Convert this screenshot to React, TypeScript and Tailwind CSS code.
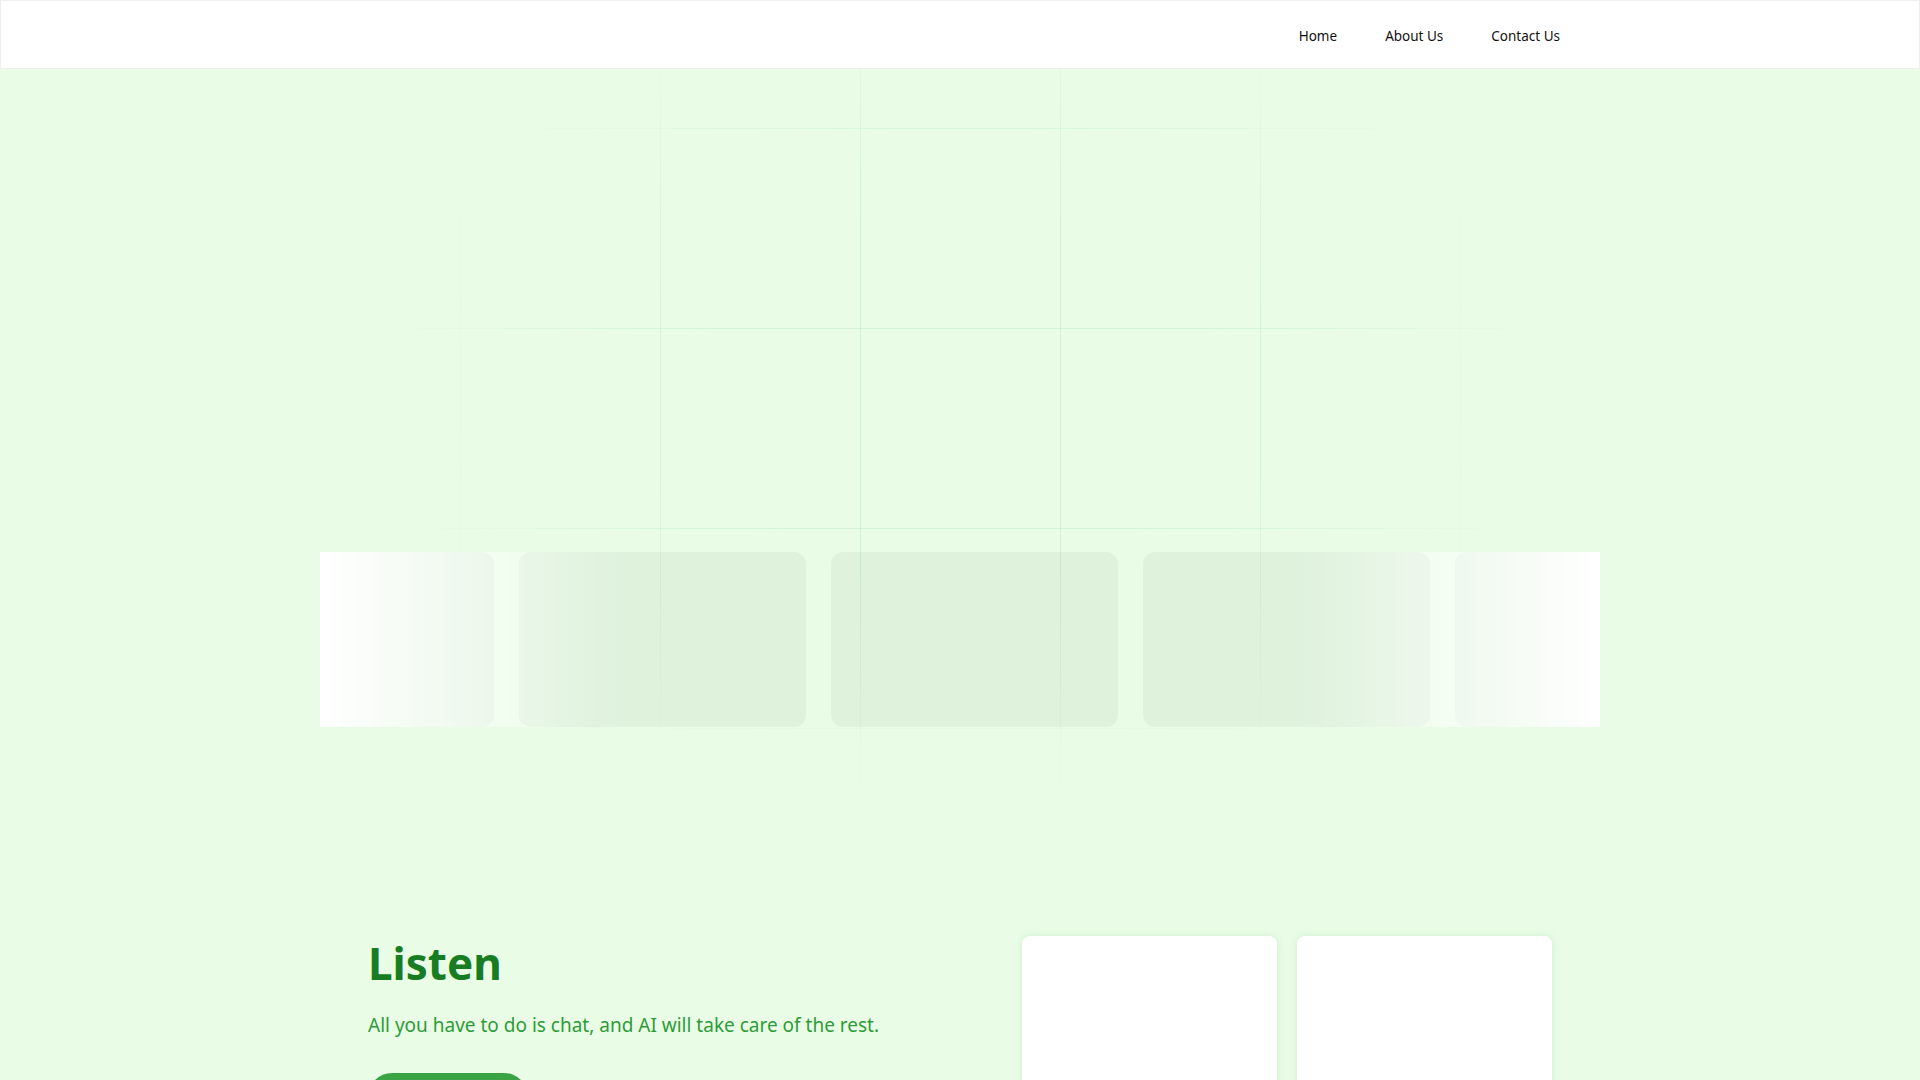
import React from "react"

const navLinks = ["Home", "About Us", "Contact Us"]

const Navbar: React.FC = () => {
  return (
    <header className="h-[69px] w-full border border-[#efefef] bg-white">
      <nav className="mx-auto flex h-full max-w-[1200px] items-center justify-end gap-12 pt-[3px]">
        {navLinks.map((label) => (
          <a key={label} href="#" className="text-[13.5px] text-[#111]">
            {label}
          </a>
        ))}
      </nav>
    </header>
  )
}

const Hero: React.FC = () => {
  const cards = [0, 1, 2, 3, 4]

  return (
    <section className="relative h-[867px] w-full pt-[483px]">
      {/* Grid backdrop */}
      <div className="pointer-events-none absolute inset-0 bg-[linear-gradient(to_right,rgba(22,163,74,0.11)_1px,transparent_1px),linear-gradient(to_bottom,rgba(22,163,74,0.11)_1px,transparent_1px)] bg-[size:200px_200px] bg-[position:60px_59px] [mask-image:radial-gradient(ellipse_600px_430px_at_960px_320px,#000_40%,transparent_100%)]" />

      {/* Carousel strip */}
      <div className="relative mx-auto h-[175px] w-[1280px] overflow-hidden">
        <div className="ml-[-113px] flex h-full gap-[25px]">
          {cards.map((i) => (
            <div key={i} className="h-full w-[287px] shrink-0 rounded-xl bg-black/[0.045]" />
          ))}
        </div>
        <div className="absolute inset-0 bg-[linear-gradient(to_right,#fff,transparent_24%,transparent_76%,#fff)]" />
      </div>
    </section>
  )
}

const Listen: React.FC = () => {
  return (
    <section className="w-full">
      <div className="mx-auto flex max-w-[1200px] items-start justify-between px-2">
        <div className="pt-[5px]">
          <h1 className="text-[44px] font-bold leading-none text-[#187c22]">Listen</h1>
          <p className="mt-[26px] text-[19px] leading-7 text-[#2f9b38]">
            All you have to do is chat, and AI will take care of the rest.
          </p>
          <button className="mt-[34px] h-12 w-[160px] rounded-full bg-[#3aa343] text-base font-semibold text-white">
            Get Started
          </button>
        </div>
        <div className="flex gap-5">
          <div className="h-[320px] w-[255px] rounded-lg bg-white shadow-[0_0_8px_rgba(40,120,40,0.12)]" />
          <div className="h-[320px] w-[255px] rounded-lg bg-white shadow-[0_0_8px_rgba(40,120,40,0.12)]" />
        </div>
      </div>
    </section>
  )
}

export default function App() {
  return (
    <div className="min-h-screen w-full overflow-hidden bg-[#e9fde6] font-['Noto_Sans',sans-serif]">
      <Navbar />
      <Hero />
      <Listen />
    </div>
  )
}
